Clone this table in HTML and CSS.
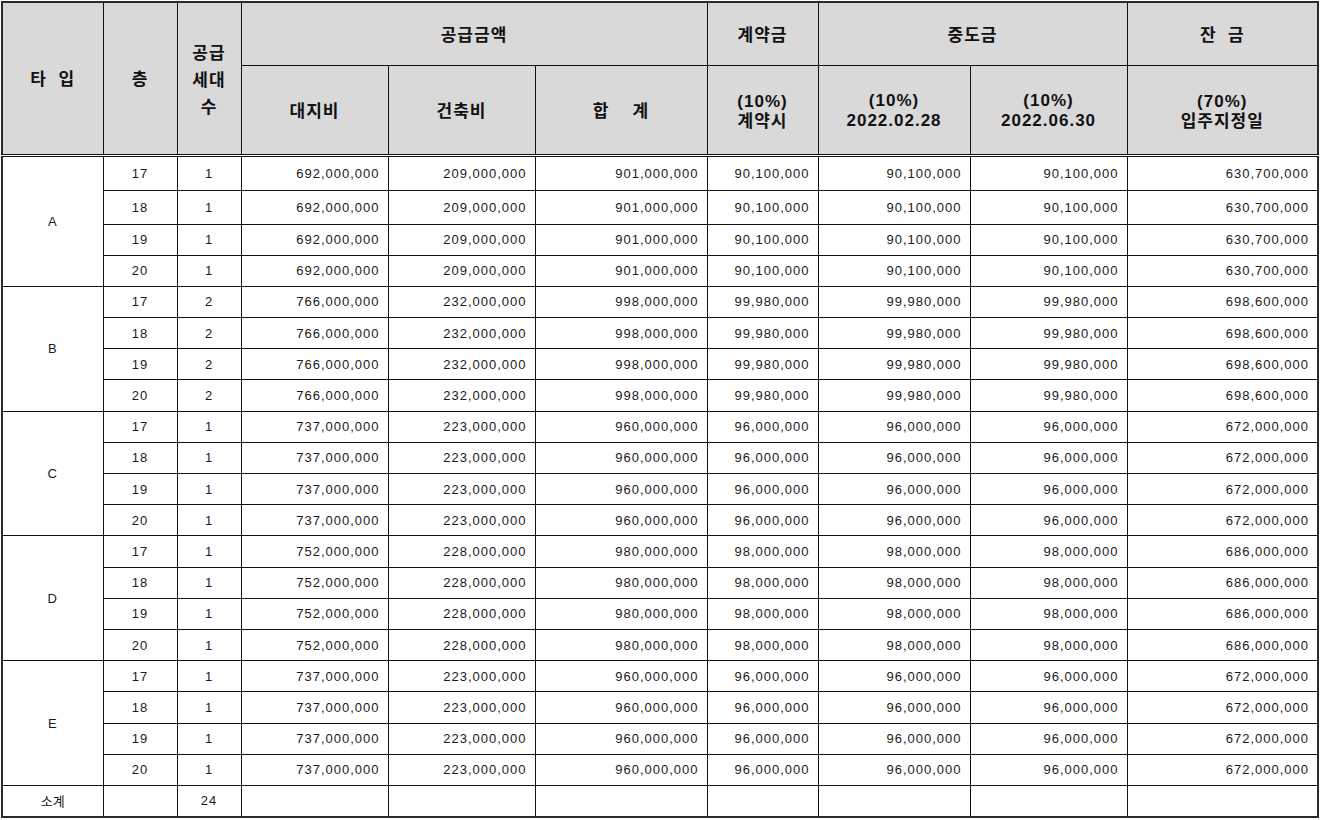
FILE: index.html
```html
<!DOCTYPE html>
<html lang="ko">
<head>
<meta charset="utf-8">
<title>공급금액</title>
<link rel="stylesheet" href="styles.css">
</head>
<body>
<table class="price">
<colgroup>
<col class="c-type"><col class="c-floor"><col class="c-units"><col class="c-land"><col class="c-build"><col class="c-sum"><col class="c-dep"><col class="c-mid1"><col class="c-mid2"><col class="c-bal">
</colgroup>
<thead>
<tr class="h1">
<th rowspan="2" class="wide">타&nbsp;&nbsp;입</th>
<th rowspan="2">층</th>
<th rowspan="2" class="units">공급<br>세대<br>수</th>
<th colspan="3">공급금액</th>
<th>계약금</th>
<th colspan="2">중도금</th>
<th class="wide">잔&nbsp;&nbsp;금</th>
</tr>
<tr class="h2">
<th>대지비</th>
<th>건축비</th>
<th>합&nbsp;&nbsp;&nbsp;&nbsp;계</th>
<th><span class="lat">(10%)</span><br>계약시</th>
<th><span class="lat">(10%)<br>2022.02.28</span></th>
<th><span class="lat">(10%)<br>2022.06.30</span></th>
<th><span class="lat">(70%)</span><br>입주지정일</th>
</tr>
</thead>
<tbody>
<tr class="r1"><td rowspan="4" class="grp">A</td><td class="ctr">17</td><td class="ctr">1</td><td>692,000,000</td><td>209,000,000</td><td>901,000,000</td><td>90,100,000</td><td>90,100,000</td><td>90,100,000</td><td>630,700,000</td></tr>
<tr class="r2"><td class="ctr">18</td><td class="ctr">1</td><td>692,000,000</td><td>209,000,000</td><td>901,000,000</td><td>90,100,000</td><td>90,100,000</td><td>90,100,000</td><td>630,700,000</td></tr>
<tr><td class="ctr">19</td><td class="ctr">1</td><td>692,000,000</td><td>209,000,000</td><td>901,000,000</td><td>90,100,000</td><td>90,100,000</td><td>90,100,000</td><td>630,700,000</td></tr>
<tr><td class="ctr">20</td><td class="ctr">1</td><td>692,000,000</td><td>209,000,000</td><td>901,000,000</td><td>90,100,000</td><td>90,100,000</td><td>90,100,000</td><td>630,700,000</td></tr>

<tr><td rowspan="4" class="grp">B</td><td class="ctr">17</td><td class="ctr">2</td><td>766,000,000</td><td>232,000,000</td><td>998,000,000</td><td>99,980,000</td><td>99,980,000</td><td>99,980,000</td><td>698,600,000</td></tr>
<tr><td class="ctr">18</td><td class="ctr">2</td><td>766,000,000</td><td>232,000,000</td><td>998,000,000</td><td>99,980,000</td><td>99,980,000</td><td>99,980,000</td><td>698,600,000</td></tr>
<tr><td class="ctr">19</td><td class="ctr">2</td><td>766,000,000</td><td>232,000,000</td><td>998,000,000</td><td>99,980,000</td><td>99,980,000</td><td>99,980,000</td><td>698,600,000</td></tr>
<tr><td class="ctr">20</td><td class="ctr">2</td><td>766,000,000</td><td>232,000,000</td><td>998,000,000</td><td>99,980,000</td><td>99,980,000</td><td>99,980,000</td><td>698,600,000</td></tr>

<tr><td rowspan="4" class="grp">C</td><td class="ctr">17</td><td class="ctr">1</td><td>737,000,000</td><td>223,000,000</td><td>960,000,000</td><td>96,000,000</td><td>96,000,000</td><td>96,000,000</td><td>672,000,000</td></tr>
<tr><td class="ctr">18</td><td class="ctr">1</td><td>737,000,000</td><td>223,000,000</td><td>960,000,000</td><td>96,000,000</td><td>96,000,000</td><td>96,000,000</td><td>672,000,000</td></tr>
<tr><td class="ctr">19</td><td class="ctr">1</td><td>737,000,000</td><td>223,000,000</td><td>960,000,000</td><td>96,000,000</td><td>96,000,000</td><td>96,000,000</td><td>672,000,000</td></tr>
<tr><td class="ctr">20</td><td class="ctr">1</td><td>737,000,000</td><td>223,000,000</td><td>960,000,000</td><td>96,000,000</td><td>96,000,000</td><td>96,000,000</td><td>672,000,000</td></tr>

<tr><td rowspan="4" class="grp">D</td><td class="ctr">17</td><td class="ctr">1</td><td>752,000,000</td><td>228,000,000</td><td>980,000,000</td><td>98,000,000</td><td>98,000,000</td><td>98,000,000</td><td>686,000,000</td></tr>
<tr><td class="ctr">18</td><td class="ctr">1</td><td>752,000,000</td><td>228,000,000</td><td>980,000,000</td><td>98,000,000</td><td>98,000,000</td><td>98,000,000</td><td>686,000,000</td></tr>
<tr><td class="ctr">19</td><td class="ctr">1</td><td>752,000,000</td><td>228,000,000</td><td>980,000,000</td><td>98,000,000</td><td>98,000,000</td><td>98,000,000</td><td>686,000,000</td></tr>
<tr><td class="ctr">20</td><td class="ctr">1</td><td>752,000,000</td><td>228,000,000</td><td>980,000,000</td><td>98,000,000</td><td>98,000,000</td><td>98,000,000</td><td>686,000,000</td></tr>

<tr><td rowspan="4" class="grp">E</td><td class="ctr">17</td><td class="ctr">1</td><td>737,000,000</td><td>223,000,000</td><td>960,000,000</td><td>96,000,000</td><td>96,000,000</td><td>96,000,000</td><td>672,000,000</td></tr>
<tr><td class="ctr">18</td><td class="ctr">1</td><td>737,000,000</td><td>223,000,000</td><td>960,000,000</td><td>96,000,000</td><td>96,000,000</td><td>96,000,000</td><td>672,000,000</td></tr>
<tr><td class="ctr">19</td><td class="ctr">1</td><td>737,000,000</td><td>223,000,000</td><td>960,000,000</td><td>96,000,000</td><td>96,000,000</td><td>96,000,000</td><td>672,000,000</td></tr>
<tr><td class="ctr">20</td><td class="ctr">1</td><td>737,000,000</td><td>223,000,000</td><td>960,000,000</td><td>96,000,000</td><td>96,000,000</td><td>96,000,000</td><td>672,000,000</td></tr>

<tr class="total"><td class="grp kr">소계</td><td class="ctr"></td><td class="ctr">24</td><td></td><td></td><td></td><td></td><td></td><td></td><td></td></tr>
</tbody>
</table>
</body>
</html>
```
FILE: styles.css
```css
html, body {
  margin: 0;
  padding: 0;
  background: #ffffff;
}

body {
  padding: 1px 0 0 1px;
}

.price {
  border-collapse: collapse;
  table-layout: fixed;
  width: 1318px;
  border: 2px solid #2a2a2a;
  font-family: "Liberation Sans", "Noto Sans CJK KR", sans-serif;
  font-size: 13px;
  color: #1a1a1a;
}

.c-type  { width: 101px; }
.c-floor { width: 74px; }
.c-units { width: 64px; }
.c-land  { width: 147px; }
.c-build { width: 147px; }
.c-sum   { width: 172px; }
.c-dep   { width: 111px; }
.c-mid1  { width: 152px; }
.c-mid2  { width: 157px; }
.c-bal   { width: 191px; }

.price th,
.price td {
  border: 1px solid #111;
  padding: 0;
}

.price th {
  background: #d9d9d9;
  font-family: "Noto Sans CJK KR", sans-serif;
  font-weight: bold;
  font-size: 17px;
  line-height: 18px;
  letter-spacing: 1px;
  color: #111;
  text-align: center;
  vertical-align: middle;
}

.price th .lat {
  font-family: "Liberation Sans", sans-serif;
  font-weight: bold;
  font-size: 17px;
  letter-spacing: 1px;
}

.price th.units {
  line-height: 27px;
}

.price .h1 { height: 63px; }
.price .h2 { height: 90px; }

.price .h2 th,
.price .h1 th[rowspan] {
  border-bottom: 3px double #111;
}

.price tbody tr { height: 31.2px; }
.price tbody tr.r1 { height: 35px; }
.price tbody tr.r2 { height: 34px; }

.price td {
  text-align: right;
  padding-right: 8px;
  letter-spacing: 1px;
  vertical-align: middle;
  white-space: nowrap;
}

.price td.ctr,
.price td.grp {
  text-align: center;
  padding-right: 0;
}

.price td.kr {
  font-family: "Noto Sans CJK KR", sans-serif;
  font-size: 13px;
  letter-spacing: 0;
}
```
